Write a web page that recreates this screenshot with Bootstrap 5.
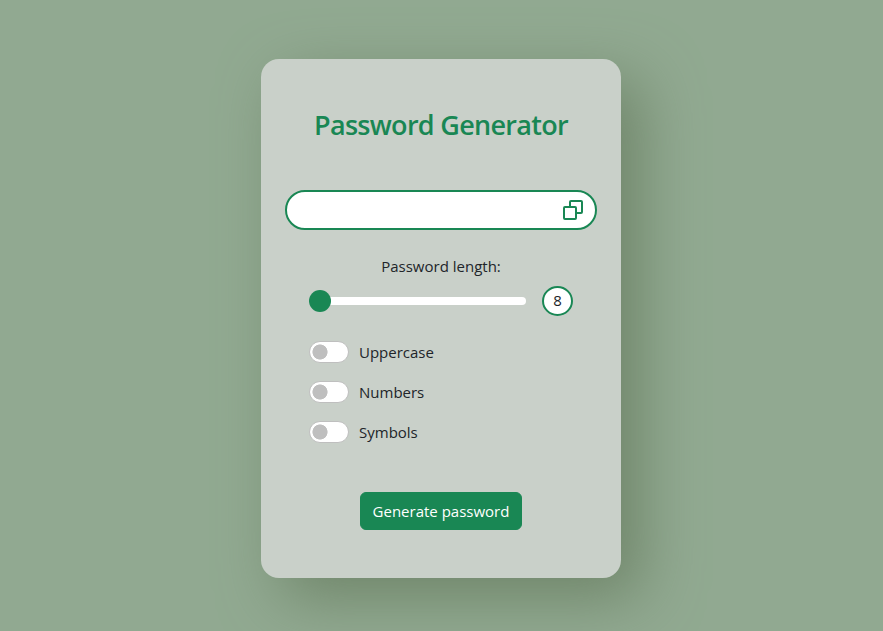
<!DOCTYPE html>
<html lang="en">
<head>
<meta charset="utf-8">
<meta name="viewport" content="width=device-width, initial-scale=1">
<title>Password Generator</title>
<link href="https://cdn.jsdelivr.net/npm/bootstrap@5.3.0/dist/css/bootstrap.min.css" rel="stylesheet">
<style>
body { background: #91a991; font-family: "Open Sans", "Noto Sans", sans-serif; font-size: 15px; padding-right: 1px; }
.generator { width: 360px; height: 519px; margin-top: 6px; border-radius: 18px; background: #c9d0c9; box-shadow: 20px 20px 60px #70866a; padding: 49px 24px 48px; }
.title { font-size: 27px; font-weight: 600; line-height: 34px; letter-spacing: -.7px; margin-bottom: 48px; white-space: nowrap; }
.output { height: 40px; border: 2px solid #198754; border-radius: 20px; padding-right: 11px; }
.output input { background: transparent; outline: 0; min-width: 0; }
.length-label { line-height: 24px; margin-top: 24px; margin-bottom: 8px; }
.length-range { width: 217px; height: 30px; }
.length-range::-webkit-slider-runnable-track { background: #fff; height: 8px; border-radius: 4px; }
.length-range::-webkit-slider-thumb { width: 22px; height: 22px; margin-top: -7px; background: #198754; }
.length-value { width: 31px; height: 30px; border: 2px solid #198754; padding-bottom: 1px; }
.options { margin-top: 24px; gap: 16px; }
.option { height: 24px; padding: 0; margin: 0; gap: 10px; }
.option .form-check-input { width: 40px; height: 22px; margin: 0; border: 1px solid #bfbfbf; background-color: #fff; background-image: radial-gradient(circle at 10px 10px, #bfbfbf 7.2px, transparent 7.9px); background-size: 100% 100%; background-position: 0 0; }
.generate { width: 162px; height: 38px; margin-top: 48px; padding: 0; font-size: 15px; white-space: nowrap; }
</style>
</head>
<body class="vh-100 d-flex justify-content-center align-items-center overflow-hidden">
<main class="generator d-flex flex-column flex-shrink-0">
  <h1 class="title text-success text-center"><span>Password Generator</span></h1>
  <div class="output d-flex align-items-center bg-white">
    <input class="border-0 flex-grow-1 ps-3" type="text" readonly aria-label="Password">
    <button class="btn p-0 border-0 d-flex" type="button" aria-label="Copy password">
      <svg width="22" height="22" viewBox="0 0 22 22" fill="none" stroke="#198754" stroke-width="2" stroke-linejoin="round">
        <rect x="2" y="8" width="12" height="12" rx="1"/>
        <path d="M8 8V3a1 1 0 0 1 1-1h10a1 1 0 0 1 1 1v10a1 1 0 0 1-1 1h-5"/>
      </svg>
    </button>
  </div>
  <label class="length-label text-center" for="length"><span>Password length:</span></label>
  <div class="d-flex align-items-center gap-3 px-4">
    <input class="form-range length-range" id="length" type="range" min="8" max="32" value="8">
    <span class="length-value rounded-circle bg-white d-flex align-items-center justify-content-center flex-shrink-0">8</span>
  </div>
  <div class="options d-flex flex-column px-4">
    <div class="form-check form-switch option d-flex align-items-center">
      <input class="form-check-input" type="checkbox" role="switch" id="upper"><label class="form-check-label" for="upper">Uppercase</label>
    </div>
    <div class="form-check form-switch option d-flex align-items-center">
      <input class="form-check-input" type="checkbox" role="switch" id="numbers"><label class="form-check-label" for="numbers">Numbers</label>
    </div>
    <div class="form-check form-switch option d-flex align-items-center">
      <input class="form-check-input" type="checkbox" role="switch" id="symbols"><label class="form-check-label" for="symbols">Symbols</label>
    </div>
  </div>
  <button class="btn btn-success generate align-self-center flex-shrink-0" type="button">Generate password</button>
</main>
<script src="https://cdn.jsdelivr.net/npm/bootstrap@5.3.0/dist/js/bootstrap.bundle.min.js"></script>
</body>
</html>
